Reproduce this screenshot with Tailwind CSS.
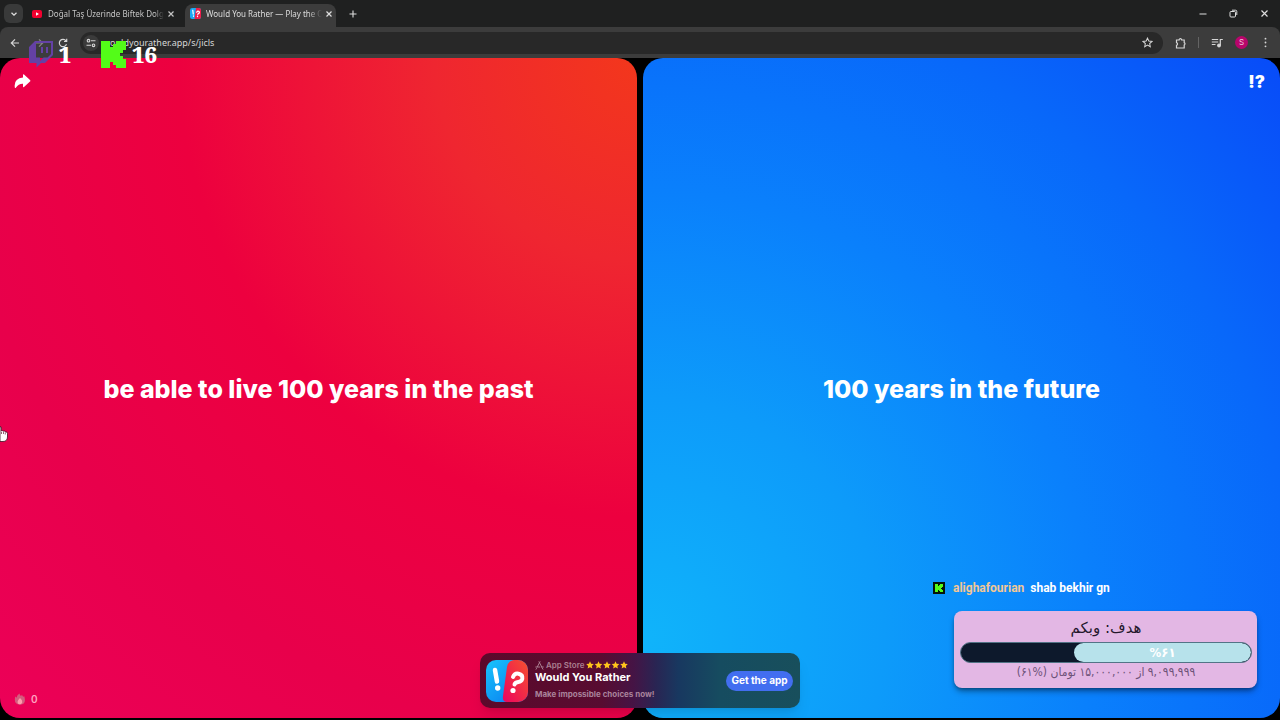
<!DOCTYPE html>
<html lang="en">
<head>
  <meta charset="UTF-8" />
  <meta name="viewport" content="width=device-width, initial-scale=1.0" />
  <title>Would You Rather</title>
  <script src="https://cdn.jsdelivr.net/npm/@tailwindcss/browser@4"></script>
</head>
<body class="bg-black h-screen flex flex-col overflow-hidden relative font-['Inter',sans-serif]">
  <!-- Tab strip -->
  <header class="h-[27px] shrink-0 bg-[#1f2020] flex items-center text-[#dedede] font-['Noto_Sans',sans-serif] text-[8px]">
    <button aria-label="Search tabs" class="ml-1 size-[19px] rounded-md bg-[#393a3a] flex items-center justify-center">
      <svg class="size-2" viewBox="0 0 8 8" fill="none" stroke="currentColor" stroke-width="1.3"><path d="M1.5 2.7 4 5.2l2.500-2.500" /></svg>
    </button>
    <div class="ml-2 w-[144px] flex items-center text-[#c4c4c4]">
      <svg class="w-3 h-3 shrink-0" viewBox="0 0 12 12"><rect x="1" y="2" width="10" height="8" rx="2" fill="#f4002f" /><path d="M5 4.200v3.600L8 6z" fill="#fff" /></svg>
      <span class="ml-[5px] whitespace-nowrap [mask-image:linear-gradient(to_right,black_92%,transparent)]">Doğal Taş Üzerinde Biftek Dolg</span>
      <button aria-label="Close tab" class="ml-auto shrink-0"><svg class="size-2" viewBox="0 0 8 8" stroke="currentColor" stroke-width="1.2"><path d="M1.500 1.500l5 5m0-5l-5 5" /></svg></button>
    </div>
    <div class="ml-[10px] self-end h-[23px] w-[151px] rounded-t-lg bg-[#3c3c3c] flex items-center pb-1 pl-[5px] pr-[3px]">
      <svg class="size-[11px] shrink-0" viewBox="0 0 44 44"><rect width="44" height="44" rx="9" fill="#19a9f5" /><path d="M24 0h12q8 0 8 8v28q0 8-8 8H18z" fill="#ee1e4b" /><path d="M11 9l2 15M14 31v2M27 17q4-7 9-3t-5 11M30 32v2" fill="none" stroke="#fff" stroke-width="5" stroke-linecap="round" /></svg>
      <span class="ml-[5px] whitespace-nowrap [mask-image:linear-gradient(to_right,black_88%,transparent)]">Would You Rather — Play the C</span>
      <button aria-label="Close tab" class="ml-auto shrink-0"><svg class="size-2" viewBox="0 0 8 8" stroke="currentColor" stroke-width="1.2"><path d="M1.500 1.500l5 5m0-5l-5 5" /></svg></button>
    </div>
    <button aria-label="New tab" class="ml-[13px]"><svg class="size-2" viewBox="0 0 8 8" stroke="currentColor" stroke-width="1.100"><path d="M.5 4h7M4 .5v7" /></svg></button>
    <div class="ml-auto flex items-center gap-[22px] pr-[11px]">
      <button aria-label="Minimize"><svg class="size-2" viewBox="0 0 8 8" stroke="currentColor"><path d="M.5 4h7" /></svg></button>
      <button aria-label="Restore"><svg class="size-[9px]" viewBox="0 0 9 9" fill="none" stroke="currentColor"><rect x="1" y="2.500" width="5.500" height="5.500" rx="1" /><path d="M3 1.200h3.500q1.300 0 1.300 1.300V6" /></svg></button>
      <button aria-label="Close"><svg class="size-[9px]" viewBox="0 0 9 9" stroke="currentColor" stroke-width="1.200"><path d="M1.500 1.500l6 6m0-6l-6 6" /></svg></button>
    </div>
  </header>

  <!-- Toolbar -->
  <div class="bg-[#1f2020] shrink-0">
    <nav class="h-[31px] rounded-t-lg bg-[#3c3c3c] flex items-center text-[#d6d6d6]">
      <button aria-label="Back" class="ml-[10px]"><svg class="size-[10px]" viewBox="0 0 10 10" fill="none" stroke="currentColor" stroke-width="1.200"><path d="M9 5H1.500M5 1.300 1.300 5 5 8.700" /></svg></button>
      <button aria-label="Forward" class="ml-[14px] text-[#858585]"><svg class="size-[10px]" viewBox="0 0 10 10" fill="none" stroke="currentColor" stroke-width="1.200"><path d="M1 5h7.500M5 1.300 8.700 5 5 8.700" /></svg></button>
      <button aria-label="Reload" class="ml-[14px]"><svg class="size-[10px]" viewBox="0 0 10 10" fill="none" stroke="currentColor" stroke-width="1.200"><path d="M8.500 6.300A3.700 3.700 0 1 1 8 2.800M8.700.8v2.700H6" /></svg></button>
      <div class="ml-[12px] flex-1 h-[22px] rounded-full bg-[#282828] flex items-center pl-[3px] pr-[10px]">
        <button aria-label="Site information" class="size-4 rounded-full bg-[#3b3b3b] flex items-center justify-center">
          <svg class="size-[10px]" viewBox="0 0 10 10" fill="none" stroke="currentColor" stroke-width="1.100"><circle cx="2.500" cy="2.700" r="1.300" /><path d="M5 2.700h4.500M.5 7.300H5" /><circle cx="7.500" cy="7.300" r="1.300" /></svg>
        </button>
        <input aria-label="Address" value="wouldyourather.app/s/jicls" class="ml-[4px] flex-1 bg-transparent font-['Noto_Sans',sans-serif] text-[9px] text-[#d6d6d6] outline-none" />
        <button aria-label="Bookmark"><svg class="size-[11px]" viewBox="0 0 12 12" fill="none" stroke="currentColor" stroke-width="1.100"><path d="M6 1.200l1.450 3.200 3.500.4-2.600 2.350.7 3.450L6 8.900l-3.050 1.700.7-3.450L1.050 4.800l3.500-.4z" /></svg></button>
      </div>
      <button aria-label="Extensions" class="ml-3"><svg class="size-3" viewBox="0 0 12 12" fill="none" stroke="currentColor" stroke-width="1.200"><path d="M1.500 3h2.600a1.300 1.300 0 0 1 2.600 0H9.200v2.600a1.300 1.300 0 0 1 0 2.400v3H1.500V8.300a1.400 1.400 0 0 0 0-2.700z" /></svg></button>
      <span class="ml-[11px] w-px h-[11px] bg-[#646464]"></span>
      <button aria-label="Media controls" class="ml-3"><svg class="size-3" viewBox="0 0 12 12" fill="none" stroke="currentColor" stroke-width="1.200"><path d="M.8 2.500h6.400M.8 5h6.400M.8 7.500h3.700M9.300 8.500V2.500h2.500" /><circle cx="8" cy="8.500" r="1.300" fill="currentColor" /></svg></button>
      <button aria-label="Profile" class="ml-3 size-[13px] rounded-full bg-[#b8056b] text-[8px] leading-[13px] text-[#f3c3df]">S</button>
      <button aria-label="Menu" class="ml-3 mr-[9px]"><svg class="size-[11px]" viewBox="0 0 12 12" fill="currentColor"><circle cx="6" cy="1.800" r="1" /><circle cx="6" cy="6" r="1" /><circle cx="6" cy="10.200" r="1" /></svg></button>
    </nav>
  </div>

  <!-- Two choices -->
  <main class="flex-1 min-h-0 flex gap-[6px] pb-[2px] text-white text-[25px] font-extrabold">
    <section class="flex-1 relative rounded-[20px] bg-[radial-gradient(circle_at_100%_0%,#f3371c_0%,#ef2630_22%,#ed003f_50%,#e8004b_75%,#ec0058_100%)] flex">
      <button class="flex-1 pt-1">be able to live 100 years in the past</button>
      <button aria-label="Share" class="absolute left-[14px] top-[15px]"><svg class="size-[17px]" viewBox="0 0 17 17" fill="#fff"><path d="M9 2q0-1.300 1-.6l6 5.500q.8.900 0 1.700l-6 5.300q-1 .7-1-.6v-2.600Q4.500 10.500 2 14.500q-.8 1-1.200 0Q-.4 5.500 9 4.600z" /></svg></button>
      <p class="absolute left-[14px] bottom-[11px] flex items-center gap-[5px] text-[10px] leading-4 font-semibold text-[#ffa3c0]">
        <svg class="size-3" viewBox="0 0 12 12"><path d="M1.300 3.500q.8.400 1.200 1.200Q3 2 5.500.5q.2 1.600 1.500 2.500L8 1.700q.5 1.300 1.300 2l1-.5Q12.700 11.500 6 11.700-.8 11.500 1.300 3.500z" fill="#d25d7e" /><path d="M6 5q2.800 2.300 2.300 4.300Q7.500 11.500 6 11.300 3.500 11.500 3.500 9 3.800 7 6 5z" fill="#ff9cae" /></svg>
        0
      </p>
    </section>
    <section class="flex-1 relative rounded-[20px] bg-[radial-gradient(circle_at_0%_88%,#10b4fa_0%,#0d9bfa_28%,#0a80fc_52%,#0868fa_76%,#084bf8_100%)] flex">
      <button class="flex-1 pt-1">100 years in the future</button>
      <button aria-label="Random question" class="absolute right-[15px] top-[14px] text-[17px] leading-5 font-black">!?</button>
    </section>
  </main>

  <!-- App banner -->
  <aside class="absolute z-10 bottom-3 left-1/2 -translate-x-1/2 w-80 h-[55px] rounded-[10px] bg-[linear-gradient(to_right,#5c092b_0%,#580c31_38%,#451445_48%,#292553_55%,#183860_62%,#164c60_75%,#184f5c_100%)] flex items-center pl-[6px] pr-[7px] shadow-lg text-white">
    <svg class="size-[42px] shrink-0" viewBox="0 0 42 42">
      <defs>
        <linearGradient id="blue" x1="0" y1="0" x2="1" y2="1"><stop stop-color="#18c5fb" /><stop offset="1" stop-color="#0873ee" /></linearGradient>
        <linearGradient id="red" x1="1" y1="0" x2="0" y2="1"><stop stop-color="#f6512f" /><stop offset="1" stop-color="#ec035f" /></linearGradient>
        <clipPath id="icon"><rect width="42" height="42" rx="10" /></clipPath>
      </defs>
      <g clip-path="url(#icon)">
        <rect width="42" height="42" fill="url(#blue)" />
        <path d="M28 0h14v42H21q-5 0-4-6l4-29q1-6 7-7z" fill="url(#red)" />
        <path d="M9 10l2 11.500" stroke="#fff" stroke-width="4.500" stroke-linecap="round" /><circle cx="11.700" cy="28" r="2.700" fill="#fff" />
        <path d="M27 17q1.500-4 5.500-3.300 4.500 1 3.800 5-.8 3-4 3.300-3.300.5-3.800 2.500" fill="none" stroke="#fff" stroke-width="4" stroke-linecap="round" /><circle cx="27" cy="30.500" r="2.600" fill="#fff" />
      </g>
    </svg>
    <div class="ml-[7px] flex-1 whitespace-nowrap">
      <p class="flex items-center text-[8px] leading-[10px] font-semibold text-[#aa7f91]">
        <svg class="size-[9px] mr-[2px]" viewBox="0 0 9 9" fill="none" stroke="currentColor" stroke-width="1" stroke-linecap="round"><path d="M4 .8 6.800 6M5 .8 2.400 5.700M.8 6h4M6.500 6h1.800M1.500 7.500l-.4.700M7.200 7l.7 1.200" /></svg>
        App Store
        <svg aria-label="5 stars" class="ml-[2px] w-11 h-2" viewBox="0 0 44 8" fill="#ffc51b">
          <path id="star" d="M4 .3l1.100 2.500 2.700.3-2 1.800.6 2.700L4 6.200 1.600 7.600l.6-2.700-2-1.800 2.700-.3z" />
          <use href="#star" x="8.500" /><use href="#star" x="17" /><use href="#star" x="25.500" /><use href="#star" x="34" />
        </svg>
      </p>
      <p class="text-[11px] leading-[15px] font-bold">Would You Rather</p>
      <p class="mt-[2px] text-[8px] leading-[14px] font-bold text-[#a9829b]">Make impossible choices now!</p>
    </div>
    <button class="h-5 w-[67px] rounded-full bg-[#426ef0] text-[10px] font-bold whitespace-nowrap">Get the app</button>
  </aside>

  <!-- Viewer counters -->
  <div class="absolute z-10 left-[29px] top-[39px] h-[30px] flex items-center text-white font-['Noto_Serif','DejaVu_Serif',serif] font-black text-[22px]">
    <svg class="w-6 h-[27px]" viewBox="0 0 24 27"><path fill="#6441a5" fill-rule="evenodd" d="M6 0h18v14l-8 8h-4l-4.500 4.500V22H0V6zM7 2v14.500h4v3.500l3.500-3.500h4L22 13V2z" /><path fill="#6441a5" d="M12 6h2v6h-2zM17 6h2v6h-2z" /></svg>
    <span class="ml-[5px] w-[14px] text-center">1</span>
    <svg class="ml-[29px] w-[25px] h-[27px]" viewBox="0 0 25 27" fill="#53fc18"><path d="M0 0h9v6h3V3h3V0h10v9h-3v3h-3v3h3v3h3v9H15v-3h-3v-3H9v6H0z" /></svg>
    <span class="ml-[6px]">16</span>
  </div>

  <!-- Chat message -->
  <p class="absolute z-10 left-[933px] top-[580px] flex items-center font-['Roboto',sans-serif] font-bold text-[12px] leading-4 text-white whitespace-nowrap">
    <svg class="size-3" viewBox="0 0 12 12"><path d="M0 0h12v12H0z" fill="#061508" /><path d="M2 2h3v2h1V3h1V2h3v3H9v1H8v1h1v1h1v2H7V9H6V8H5v2H2z" fill="#53fc18" /></svg>
    <span class="ml-2 text-[#f3c795]">alighafourian</span>
    <span class="ml-[6px]">shab bekhir gn</span>
  </p>

  <!-- Donation goal -->
  <section dir="rtl" lang="fa" class="absolute z-10 right-[23px] bottom-8 w-[303px] h-[77px] rounded-lg bg-[#e3b7e4] pl-[6px] pr-[5px] pt-[7px] text-center font-['DejaVu_Sans',sans-serif] shadow-md shadow-black/40">
    <h2 class="text-[15px] leading-5 text-[#25182c]">هدف: وبکم</h2>
    <div class="mt-1 h-[21px] rounded-full border border-[#527486] bg-[#0d192c] overflow-hidden">
      <div class="h-full rounded-full bg-[#b7e2eb] text-white text-[13px] leading-[19px] font-bold font-['DejaVu_Sans_Condensed','DejaVu_Sans',sans-serif]" style="width: 61%">%۶۱</div>
    </div>
    <p class="text-[12px] leading-[18px] text-[#6d5278] whitespace-nowrap font-['DejaVu_Sans_Condensed','DejaVu_Sans',sans-serif]">۹,۰۹۹,۹۹۹ از ۱۵,۰۰۰,۰۰۰ تومان (%۶۱)</p>
  </section>

  <!-- Hand pointer -->
  <svg class="absolute z-10 left-0 top-[426px] w-2 h-4" viewBox="0 0 8 16"><path d="M0 .5q1.300 0 1.300 1.500v3q1.200-.8 2 .2 1.300-.6 1.800.5Q7.500 5.600 7.500 7.500V11Q7.300 15.500 3 15.500H0z" fill="#fff" stroke="#3d1025" stroke-width=".8" /><path d="M1.500 6v2M3.500 6v2M5.300 6.500v2" stroke="#65203b" stroke-width=".7" /></svg>
</body>
</html>
